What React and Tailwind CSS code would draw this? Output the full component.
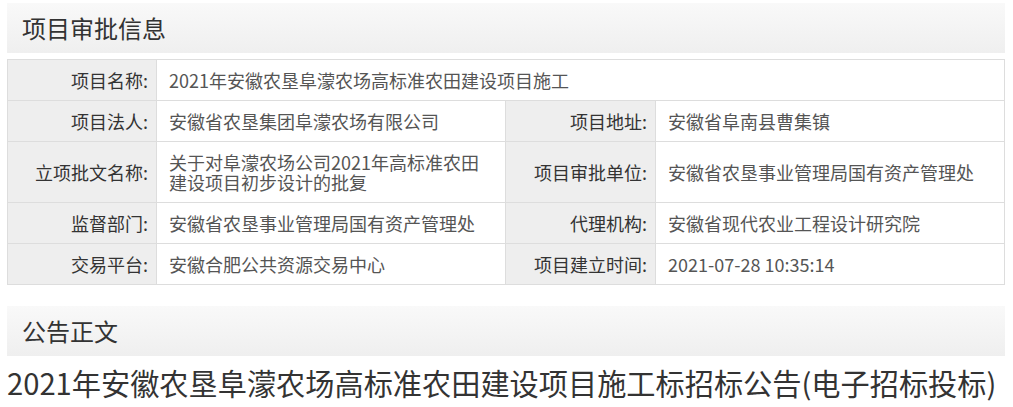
import React from 'react';

const rows = [
  { a: '项目名称:', b: '2021年安徽农垦阜濛农场高标准农田建设项目施工', span: true },
  { a: '项目法人:', b: '安徽省农垦集团阜濛农场有限公司', c: '项目地址:', d: '安徽省阜南县曹集镇' },
  { a: '立项批文名称:', b: '关于对阜濛农场公司2021年高标准农田建设项目初步设计的批复', c: '项目审批单位:', d: '安徽省农垦事业管理局国有资产管理处' },
  { a: '监督部门:', b: '安徽省农垦事业管理局国有资产管理处', c: '代理机构:', d: '安徽省现代农业工程设计研究院' },
  { a: '交易平台:', b: '安徽合肥公共资源交易中心', c: '项目建立时间:', d: '2021-07-28 10:35:14' },
];

function SectionTitle({ children }) {
  return (
    <div className="h-[50px] flex items-center pl-[15px] bg-gradient-to-b from-[#f9f9f9] to-[#efefef] text-[24px] text-[#333]">
      {children}
    </div>
  );
}

const th = 'bg-[#eeeeee] border border-[#dddddd] text-right align-middle px-[8px] py-[10px] text-[#333] font-normal';
const td = 'border border-[#dddddd] text-left align-middle px-[12px] py-[10px] text-[#555]';

export default function App() {
  return (
    <div
      className="bg-white min-h-screen px-[7px] pt-[3px] pr-[8px]"
      style={{ fontFamily: '"Noto Sans CJK SC", "Noto Sans", sans-serif' }}
    >
      <SectionTitle>项目审批信息</SectionTitle>

      <table className="w-full mt-[6px] border-collapse table-fixed text-[18px] leading-[20px]">
        <colgroup>
          <col className="w-[149px]" />
          <col className="w-[349px]" />
          <col className="w-[150px]" />
          <col />
        </colgroup>
        <tbody>
          {rows.map((r, i) => (
            <tr key={i}>
              <th className={th}>{r.a}</th>
              {r.span ? (
                <td className={td} colSpan={3}>{r.b}</td>
              ) : (
                <>
                  <td className={td}>{r.b}</td>
                  <th className={th}>{r.c}</th>
                  <td className={td}>{r.d}</td>
                </>
              )}
            </tr>
          ))}
        </tbody>
      </table>

      <div className="mt-[21px]">
        <SectionTitle>公告正文</SectionTitle>
      </div>

      <h1 className="mt-[6px] text-[29.2px] leading-[40px] text-[#333] whitespace-nowrap">
        2021年安徽农垦阜濛农场高标准农田建设项目施工标招标公告(电子招标投标)
      </h1>
    </div>
  );
}
